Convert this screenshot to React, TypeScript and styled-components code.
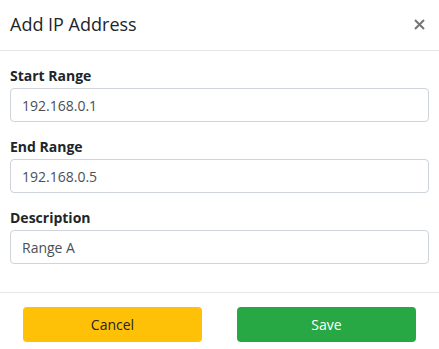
import styled, { createGlobalStyle } from "styled-components";

const GlobalStyle = createGlobalStyle`
  html, body {
    margin: 0;
    padding: 0;
    background: #fff;
  }
  body {
    font-family: "Open Sans", "Noto Sans", sans-serif;
    color: #212529;
  }
  * {
    box-sizing: border-box;
  }
`;

const Modal = styled.div`
  width: 439px;
  min-height: 349px;
  background: #fff;
  display: flex;
  flex-direction: column;
`;

const Header = styled.header`
  display: flex;
  align-items: center;
  justify-content: space-between;
  height: 51px;
  padding: 0 12px 2px 10px;
  border-bottom: 1px solid #e5e7ea;
`;

const Title = styled.h5`
  margin: 0;
  font-size: 18px;
  font-weight: 500;
  line-height: 24px;
  color: #212529;
`;

const CloseButton = styled.button`
  display: flex;
  align-items: center;
  justify-content: center;
  width: 16px;
  height: 16px;
  padding: 0;
  border: 0;
  background: transparent;
  cursor: pointer;
`;

const Body = styled.div`
  padding: 15px 10px 28px;
  display: flex;
  flex-direction: column;
  gap: 15px;
`;

const Group = styled.div`
  display: flex;
  flex-direction: column;
`;

const Label = styled.label`
  font-size: 14px;
  font-weight: 700;
  line-height: 20px;
  margin-bottom: 2px;
  color: #212529;
`;

const Input = styled.input`
  height: 34px;
  width: 100%;
  padding: 0 11px;
  font-family: inherit;
  font-size: 14px;
  color: #495057;
  border: 1px solid #ced4da;
  border-radius: 4px;
  background: #fff;
  outline: none;
`;

const Footer = styled.footer`
  display: flex;
  gap: 35px;
  padding: 14px 23px 8px;
  border-top: 1px solid #e5e7ea;
`;

const Button = styled.button<{ $variant: "warning" | "success" }>`
  flex: 1;
  height: 35px;
  border: 0;
  border-radius: 4px;
  font-family: inherit;
  font-size: 14px;
  cursor: pointer;
  background: ${(p) => (p.$variant === "warning" ? "#ffc107" : "#28a745")};
  color: ${(p) => (p.$variant === "warning" ? "#212529" : "#fff")};
`;

const fields = [
  { label: "Start Range", value: "192.168.0.1" },
  { label: "End Range", value: "192.168.0.5" },
  { label: "Description", value: "Range A" },
];

export default function App() {
  return (
    <>
      <GlobalStyle />
      <Modal>
        <Header>
          <Title>Add IP Address</Title>
          <CloseButton aria-label="Close">
            <svg width="11" height="11" viewBox="0 0 11 11">
              <path
                d="M1 1 L10 10 M10 1 L1 10"
                stroke="#757575"
                strokeWidth="2"
                strokeLinecap="butt"
              />
            </svg>
          </CloseButton>
        </Header>
        <Body>
          {fields.map((f) => (
            <Group key={f.label}>
              <Label>{f.label}</Label>
              <Input defaultValue={f.value} />
            </Group>
          ))}
        </Body>
        <Footer>
          <Button $variant="warning">Cancel</Button>
          <Button $variant="success">Save</Button>
        </Footer>
      </Modal>
    </>
  );
}
